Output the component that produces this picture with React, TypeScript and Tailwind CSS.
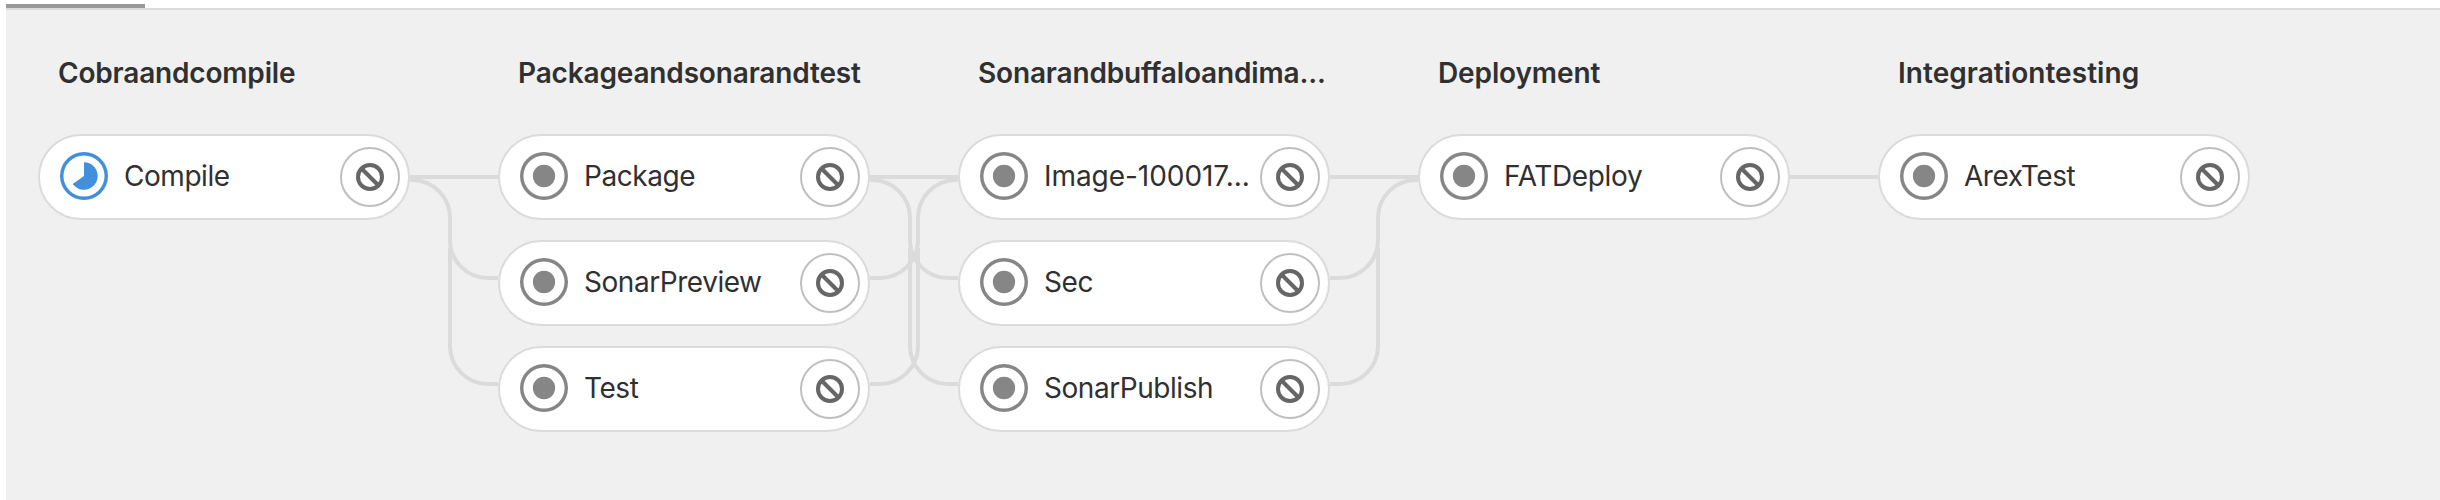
type Status = 'running' | 'created';

type Stage = {
  title: string;
  tracking: string;
  jobs: { name: string; status: Status; tracking?: string }[];
};

const stages: Stage[] = [
  {
    title: 'Cobraandcompile',
    tracking: 'tracking-[-0.18px]',
    jobs: [{ name: 'Compile', status: 'running' }],
  },
  {
    title: 'Packageandsonarandtest',
    tracking: 'tracking-[-0.16px]',
    jobs: [
      { name: 'Package', status: 'created' },
      { name: 'SonarPreview', status: 'created' },
      { name: 'Test', status: 'created' },
    ],
  },
  {
    title: 'Sonarandbuffaloandima...',
    tracking: 'tracking-[-0.16px]',
    jobs: [
      { name: 'Image-100017...', status: 'created', tracking: 'tracking-[-0.05px]' },
      { name: 'Sec', status: 'created' },
      { name: 'SonarPublish', status: 'created' },
    ],
  },
  {
    title: 'Deployment',
    tracking: 'tracking-[-0.12px]',
    jobs: [{ name: 'FATDeploy', status: 'created', tracking: 'tracking-[-0.35px]' }],
  },
  {
    title: 'Integrationtesting',
    tracking: 'tracking-[0.05px]',
    jobs: [{ name: 'ArexTest', status: 'created' }],
  },
];

function StatusIcon({ status }: { status: Status }) {
  const color = status === 'running' ? 'text-[#428fdc]' : 'text-[#868686]';
  return (
    <svg viewBox="0 0 14 14" className={`h-12 w-12 shrink-0 ${color}`} fill="currentColor">
      <path fillRule="evenodd" d="M0 7a7 7 0 1 1 14 0A7 7 0 0 1 0 7zm1 0a6 6 0 1 0 12 0A6 6 0 0 0 1 7z" />
      {status === 'running' ? (
        <path d="M7 3c2.2 0 4 1.8 4 4s-1.8 4-4 4c-1.3 0-2.5-.7-3.3-1.7L7 7V3" />
      ) : (
        <circle cx="7" cy="7" r="3.25" />
      )}
    </svg>
  );
}

function CancelButton() {
  return (
    <button
      aria-label="Cancel"
      className="flex h-[60px] w-[60px] shrink-0 items-center justify-center rounded-full border-2 border-[#bfbfbf] bg-white"
    >
      <svg viewBox="0 0 28 28" className="h-7 w-7" fill="none" stroke="#666" strokeWidth="4">
        <circle cx="14" cy="14" r="12" />
        <path d="M5.5 5.5l17 17" />
      </svg>
    </button>
  );
}

function Job({ name, status, tracking = 'tracking-[-0.45px]' }: { name: string; status: Status; tracking?: string }) {
  return (
    <div className="flex h-[86px] w-[372px] items-center rounded-full border-2 border-[#dbdbdb] bg-white pr-2 pl-5">
      <div className="-mt-0.5 flex">
        <StatusIcon status={status} />
      </div>
      <span className={`-mt-0.5 ml-4 w-0 flex-1 text-[28px] leading-9 whitespace-nowrap ${tracking}`}>{name}</span>
      <CancelButton />
    </div>
  );
}

function Links({ from, to }: { from: number; to: number }) {
  const paths = ['M0 43H88'];
  for (let i = 1; i < to; i++) {
    const y = 144 + (i - 1) * 106;
    const start = i === 1 ? 'M0 46H2A38 38 0 0 1 40 84' : 'M40 114';
    paths.push(`${start}V${y - 38}A38 38 0 0 0 78 ${y}H88`);
  }
  for (let i = 1; i < from; i++) {
    const y = 144 + (i - 1) * 106;
    const end = i === 1 ? 'V84A38 38 0 0 1 86 46H88' : 'V114';
    paths.push(`M0 ${y}H10A38 38 0 0 0 48 ${y - 38}${end}`);
  }
  return (
    <svg viewBox="0 0 88 300" className="mt-[124px] h-[300px] w-[88px] shrink-0" fill="none" stroke="#dbdbdb" strokeWidth="4">
      {paths.map((d) => (
        <path key={d} d={d} />
      ))}
    </svg>
  );
}

export default function App() {
  return (
    <div className="h-[500px] w-[2440px] overflow-hidden bg-white pt-1 pl-1.5 font-['Inter',sans-serif] text-[#303030]">
      <div className="h-1 w-[139px] bg-[#999]" />
      <div className="flex h-[492px] border-t-2 border-[#dbdbdb] bg-[#f0f0f0] pl-8">
        {stages.map((stage, i) => (
          <div key={stage.title} className="flex">
            <section className="w-[372px] pt-[43px]">
              <h2 className={`mb-[41px] pl-5 text-[28px] leading-10 font-semibold whitespace-nowrap ${stage.tracking}`}>
                {stage.title}
              </h2>
              <div className="flex flex-col gap-5">
                {stage.jobs.map((job) => (
                  <Job key={job.name} {...job} />
                ))}
              </div>
            </section>
            {i < stages.length - 1 && <Links from={stage.jobs.length} to={stages[i + 1].jobs.length} />}
          </div>
        ))}
      </div>
    </div>
  );
}
